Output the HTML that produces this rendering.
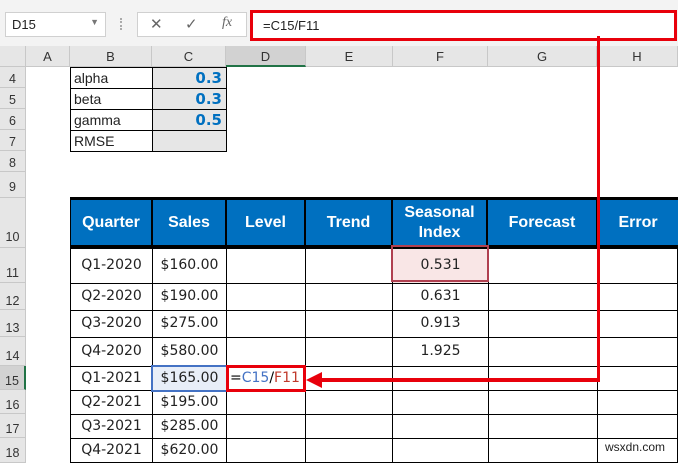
<!DOCTYPE html><html><head><style>
body{margin:0;width:678px;height:463px;overflow:hidden;background:#fff;font-family:"Liberation Sans",sans-serif;position:relative}
div{position:absolute;box-sizing:border-box}
.t{font-family:"DejaVu Sans","Liberation Sans",sans-serif}
.ch{top:46px;height:21px;background:#e6e6e6;border-right:1px solid #c8c8c8;border-bottom:1px solid #c8c8c8;font-size:13px;color:#333;text-align:center;line-height:21px}
.rh{left:0;width:26px;background:#e6e6e6;border-bottom:1px solid #c8c8c8;border-right:1px solid #c8c8c8;font-size:12.5px;color:#333;text-align:center}
.c{border:1px solid #000;font-size:13px;color:#222;text-align:center}
.h{background:#0070c0;color:#fff;font-weight:bold;font-size:16px;text-align:center;border-right:2px solid #000;display:flex;align-items:center;justify-content:center;line-height:20px}
</style></head><body>
<div style="left:0;top:0;width:678px;height:46px;background:#f3f3f3"></div>
<div style="left:5px;top:12px;width:101px;height:25px;background:#fff;border:1px solid #d0d0d0;font-size:13px;padding:4px 6px;color:#222">D15<span style="position:absolute;right:6px;top:4px;font-size:9px;color:#777">▼</span></div>
<div style="left:120px;top:18px;width:2px;height:12px;border-left:2px dotted #aaa"></div>
<div style="left:137px;top:12px;width:110px;height:25px;background:#fff;border:1px solid #d0d0d0;font-size:15px;color:#666"><span style="position:absolute;left:12px;top:2px">✕</span><span style="position:absolute;left:47px;top:2px">✓</span><span style="position:absolute;left:84px;top:2px;font-family:'Liberation Serif';font-style:italic;font-size:14px">fx</span></div>
<div style="left:250px;top:10px;width:427px;height:31px;background:#fff;border:3px solid #e8000b;font-size:13px;padding:5px 10px;color:#222">=C15/F11</div>
<div class="ch" style="left:0;width:26px"></div>
<div class="ch" style="left:26px;width:44px">A</div>
<div class="ch" style="left:70px;width:82px">B</div>
<div class="ch" style="left:152px;width:74px">C</div>
<div class="ch" style="left:226px;width:80px;background:#d2d2d2;border-bottom:2px solid #217346">D</div>
<div class="ch" style="left:306px;width:87px">E</div>
<div class="ch" style="left:393px;width:95px">F</div>
<div class="ch" style="left:488px;width:109px">G</div>
<div class="ch" style="left:597px;width:81px">H</div>
<div class="rh" style="top:67px;height:21px;line-height:24px">4</div>
<div class="rh" style="top:88px;height:21px;line-height:24px">5</div>
<div class="rh" style="top:109px;height:21px;line-height:24px">6</div>
<div class="rh" style="top:130px;height:21px;line-height:24px">7</div>
<div class="rh" style="top:151px;height:21px;line-height:24px">8</div>
<div class="rh" style="top:172px;height:26px;line-height:30px">9</div>
<div class="rh" style="top:198px;height:50px;line-height:78px">10</div>
<div class="rh" style="top:248px;height:35px;line-height:50px">11</div>
<div class="rh" style="top:283px;height:27px;line-height:36px">12</div>
<div class="rh" style="top:310px;height:27px;line-height:36px">13</div>
<div class="rh" style="top:337px;height:29px;line-height:38px">14</div>
<div class="rh" style="top:366px;height:24px;line-height:30px;background:#d2d2d2;border-right:2px solid #217346">15</div>
<div class="rh" style="top:390px;height:24px;line-height:30px">16</div>
<div class="rh" style="top:414px;height:24px;line-height:30px">17</div>
<div class="rh" style="top:438px;height:25px;line-height:30px">18</div>
<div class="c" style="left:70px;top:67px;width:83px;height:22px;text-align:left;padding:2px 3px;font-size:14px">alpha</div>
<div class="c" style="left:70px;top:88px;width:83px;height:22px;text-align:left;padding:2px 3px;font-size:14px">beta</div>
<div class="c" style="left:70px;top:109px;width:83px;height:22px;text-align:left;padding:2px 3px;font-size:14px">gamma</div>
<div class="c" style="left:70px;top:130px;width:83px;height:22px;text-align:left;padding:2px 3px;font-size:14px">RMSE</div>
<div class="c t" style="left:152px;top:67px;width:75px;height:22px;background:#e6e6e6;text-align:right;padding:1px 4px;color:#0070c0;font-weight:bold;font-size:15px">0.3</div>
<div class="c t" style="left:152px;top:88px;width:75px;height:22px;background:#e6e6e6;text-align:right;padding:1px 4px;color:#0070c0;font-weight:bold;font-size:15px">0.3</div>
<div class="c t" style="left:152px;top:109px;width:75px;height:22px;background:#e6e6e6;text-align:right;padding:1px 4px;color:#0070c0;font-weight:bold;font-size:15px">0.5</div>
<div class="c" style="left:152px;top:130px;width:75px;height:22px;background:#e6e6e6"></div>
<div style="left:70px;top:197px;width:608px;height:51px;background:#0070c0;border-top:3px solid #000;border-bottom:3px solid #000;border-left:1px solid #000"></div>
<div class="h" style="left:71px;top:200px;width:82px;height:45px">Quarter</div>
<div class="h" style="left:153px;top:200px;width:74px;height:45px">Sales</div>
<div class="h" style="left:227px;top:200px;width:79px;height:45px">Level</div>
<div class="h" style="left:306px;top:200px;width:87px;height:45px">Trend</div>
<div class="h" style="left:393px;top:200px;width:95px;height:45px">Seasonal<br>Index</div>
<div class="h" style="left:488px;top:200px;width:110px;height:45px">Forecast</div>
<div class="h" style="left:598px;top:200px;width:80px;height:45px;border-right:none">Error</div>
<div id="grid"></div>
<script>
var cols=[70,152,226,305,392,488,597,677];
var rows=[248,283,310,337,366,390,414,438,462];
var q=["Q1-2020","Q2-2020","Q3-2020","Q4-2020","Q1-2021","Q2-2021","Q3-2021","Q4-2021"];
var s=["$160.00","$190.00","$275.00","$580.00","$165.00","$195.00","$285.00","$620.00"];
var f=["0.531","0.631","0.913","1.925"];
var h="";
for(var r=0;r<8;r++){for(var c=0;c<7;c++){var t="";if(c==0)t=q[r];if(c==1)t=s[r];if(c==4&&r<4)t=f[r];
var bg=(c==4&&r==0)?"background:#f9e6e6;":"";if(c==1&&r==4)bg="background:#e8eef8;";
var hh=rows[r+1]-rows[r];
h+='<div class="c t" style="'+bg+'left:'+cols[c]+'px;top:'+rows[r]+'px;width:'+(cols[c+1]-cols[c]+1)+'px;height:'+(hh+1)+'px;line-height:'+(hh-2)+'px;font-size:14px">'+t+'</div>';}}
document.getElementById("grid").outerHTML=h;
</script>
<div style="left:391px;top:245px;width:98px;height:37px;border:2px solid #b04050"></div>
<div style="left:151px;top:365px;width:77px;height:27px;border:2px solid #4472c4"></div>
<div style="left:226px;top:365px;width:80px;height:27px;border:3px solid #e8000b;background:#fff;font-size:14px;line-height:20px;padding-left:1px" class="t">=<span style="color:#4472c4">C15</span>/<span style="color:#c0392b">F11</span></div>
<div style="left:597px;top:36px;width:3px;height:346px;background:#e8000b"></div>
<div style="left:318px;top:378px;width:282px;height:4px;background:#e8000b"></div>
<div style="left:306px;top:372px;width:0;height:0;border-top:8px solid transparent;border-bottom:8px solid transparent;border-right:16px solid #e8000b"></div>
<div style="left:605px;top:440px;font-size:12px;color:#222">wsxdn.com</div>
</body></html>
